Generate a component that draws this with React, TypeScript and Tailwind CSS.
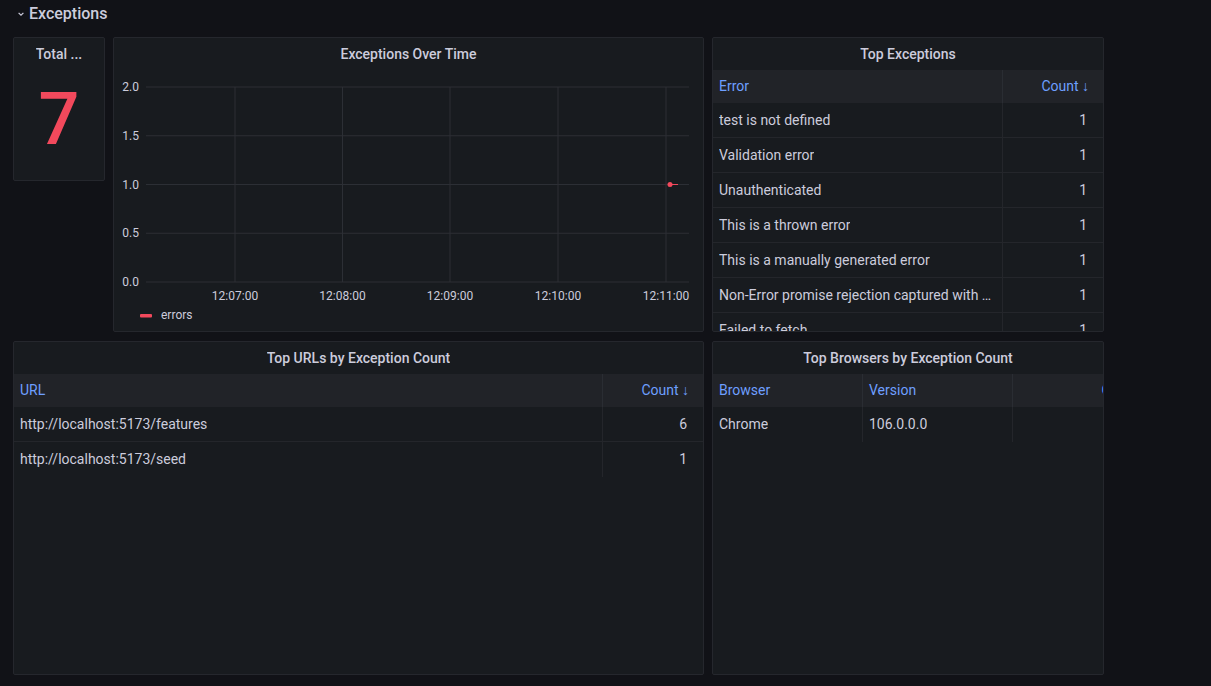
import React from "react";

const FONT = { fontFamily: "Roboto, 'Noto Sans', sans-serif" };

function Panel({
  title,
  className,
  children,
}: {
  title: string;
  className: string;
  children?: React.ReactNode;
}) {
  return (
    <div
      className={`flex flex-col overflow-hidden rounded-[2px] border border-[#25272d] bg-[#181b1f] ${className}`}
    >
      <div className="flex h-[32px] shrink-0 items-center justify-center px-2 text-[14px] font-medium text-[#ccccdc]">
        <span className="truncate">{title}</span>
      </div>
      {children}
    </div>
  );
}

type Col = { label: string; w: string; right?: boolean };

function Table({ cols, rows }: { cols: Col[]; rows: string[][] }) {
  return (
    <div className="min-h-0 flex-1 overflow-hidden">
      <div className="flex h-[33px] bg-[#212328] text-[14px] text-[#6e9fff]">
        {cols.map((c, i) => (
          <div
            key={c.label}
            className={`flex shrink-0 items-center px-[6px] ${c.w} ${
              i < cols.length - 1 ? "border-r border-[#2a2d33]" : ""
            } ${c.right ? "justify-end pr-[14px]" : ""}`}
          >
            {c.label}
          </div>
        ))}
      </div>
      {rows.map((r, ri) => (
        <div
          key={ri}
          className={`flex h-[35px] text-[14px] text-[#ccccdc] ${
            ri < rows.length - 1 ? "border-b border-[#24262b]" : ""
          }`}
        >
          {r.map((v, i) => (
            <div
              key={i}
              className={`flex shrink-0 items-center overflow-hidden px-[6px] ${cols[i].w} ${
                i < cols.length - 1 ? "border-r border-[#24262b]" : ""
              } ${cols[i].right ? "justify-end pr-[16px]" : ""}`}
            >
              <span className="truncate">{v}</span>
            </div>
          ))}
        </div>
      ))}
    </div>
  );
}

function Chart() {
  const ys = [
    { y: 17, l: "2.0" },
    { y: 65.75, l: "1.5" },
    { y: 114.5, l: "1.0" },
    { y: 163.25, l: "0.5" },
    { y: 212, l: "0.0" },
  ];
  const xs = [
    { x: 121, l: "12:07:00" },
    { x: 228.5, l: "12:08:00" },
    { x: 336, l: "12:09:00" },
    { x: 444, l: "12:10:00" },
    { x: 552, l: "12:11:00" },
  ];
  return (
    <svg width="591" height="263" className="block" style={FONT}>
      {ys.map((g) => (
        <g key={g.l}>
          <line x1="32" x2="575" y1={g.y} y2={g.y} stroke="#2c2f35" strokeWidth="1" />
          <text x="25" y={g.y + 4} textAnchor="end" fontSize="12" fill="#ccccdc">
            {g.l}
          </text>
        </g>
      ))}
      {xs.map((g) => (
        <g key={g.l}>
          <line x1={g.x} x2={g.x} y1="17" y2="212" stroke="#2c2f35" strokeWidth="1" />
          <text x={g.x} y="230" textAnchor="middle" fontSize="12" fill="#ccccdc">
            {g.l}
          </text>
        </g>
      ))}
      <line x1="556" x2="564" y1="114.5" y2="114.5" stroke="#f2495c" strokeWidth="1" />
      <circle cx="556" cy="114.5" r="2.5" fill="#f2495c" />
      <rect x="26" y="244" width="12" height="3.5" rx="1" fill="#f2495c" />
      <text x="47" y="249" fontSize="12" fill="#ccccdc">
        errors
      </text>
    </svg>
  );
}

export default function App() {
  return (
    <div className="h-[686px] w-[1211px] overflow-hidden bg-[#111217] pl-[13px]" style={FONT}>
      <div className="flex h-[26px] items-center gap-[4px] pl-[4px] pt-[2px] text-[#ccccdc]">
        <svg width="8" height="8" viewBox="0 0 10 10">
          <path d="M2 3.5 L5 6.5 L8 3.5" fill="none" stroke="#ccccdc" strokeWidth="1.5" />
        </svg>
        <span className="text-[16px] font-medium">Exceptions</span>
      </div>

      <div className="mt-[11px] flex h-[295px] gap-2">
        <Panel title="Total ..." className="h-[144px] w-[92px]">
          <div className="flex flex-1 items-center justify-center pb-[10px] text-[72px] font-medium leading-none text-[#f2495c]">
            7
          </div>
        </Panel>
        <Panel title="Exceptions Over Time" className="w-[591px]">
          <Chart />
        </Panel>
        <Panel title="Top Exceptions" className="w-[392px]">
          <Table
            cols={[
              { label: "Error", w: "w-[290px]" },
              { label: "Count ↓", w: "flex-1", right: true },
            ]}
            rows={[
              ["test is not defined", "1"],
              ["Validation error", "1"],
              ["Unauthenticated", "1"],
              ["This is a thrown error", "1"],
              ["This is a manually generated error", "1"],
              ["Non-Error promise rejection captured with value", "1"],
              ["Failed to fetch", "1"],
            ]}
          />
        </Panel>
      </div>

      <div className="mt-[9px] flex h-[334px] gap-2">
        <Panel title="Top URLs by Exception Count" className="w-[691px]">
          <Table
            cols={[
              { label: "URL", w: "w-[589px]" },
              { label: "Count ↓", w: "flex-1", right: true },
            ]}
            rows={[
              ["http://localhost:5173/features", "6"],
              ["http://localhost:5173/seed", "1"],
            ]}
          />
        </Panel>
        <Panel title="Top Browsers by Exception Count" className="w-[392px]">
          <div className="w-[450px]">
            <Table
              cols={[
                { label: "Browser", w: "w-[150px]" },
                { label: "Version", w: "w-[150px]" },
                { label: "Count ↓", w: "w-[150px]", right: true },
              ]}
              rows={[["Chrome", "106.0.0.0", "7"]]}
            />
          </div>
        </Panel>
      </div>
    </div>
  );
}
